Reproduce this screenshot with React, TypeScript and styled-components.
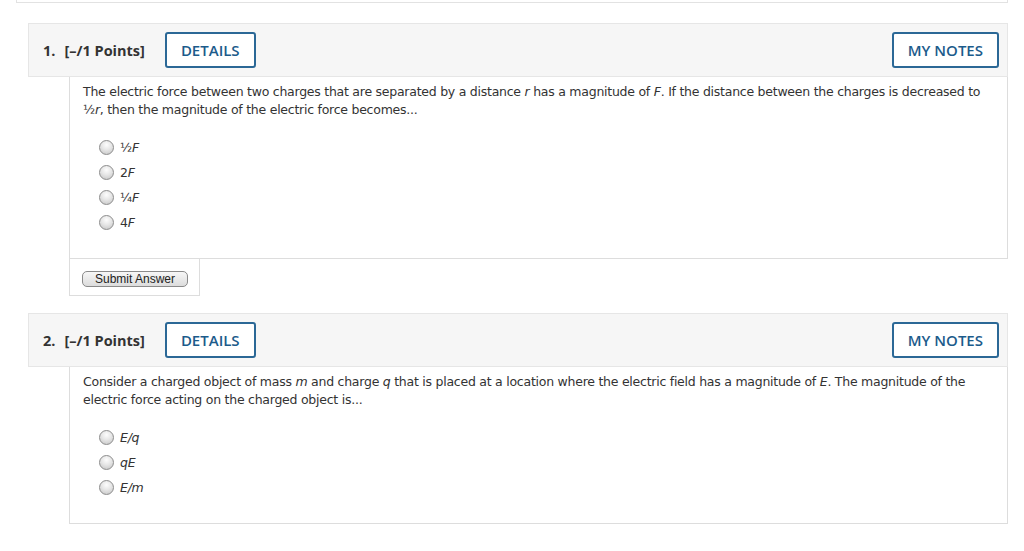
import * as React from 'react';
import styled, { createGlobalStyle } from 'styled-components';

const GlobalStyle = createGlobalStyle`
    body {
        margin: 0;
        background: #ffffff;
    }
    * {
        box-sizing: border-box;
    }
`;

const Page = styled.div`
    display: flex;
    flex-direction: column;
    gap: 17px;
    padding: 0 16px 20px 16px;
`;

const PrevBox = styled.div`
    height: 3px;
    margin-bottom: 3px;
    border: 1px solid #e2e2e2;
    border-top: none;
`;

const Question = styled.section`
    margin-left: 12px;
    display: flex;
    flex-direction: column;
`;

const Header = styled.div`
    display: flex;
    align-items: center;
    height: 54px;
    padding: 0 8px 0 14px;
    background: #f6f6f6;
    border: 1px solid #e6e6e6;
    font-family: 'Open Sans', 'Liberation Sans', sans-serif;
    color: #333333;
`;

const Number = styled.span`
    font-size: 14.5px;
    font-weight: 700;
`;

const Points = styled.span`
    font-size: 14.5px;
    font-weight: 700;
    margin-left: 9px;
`;

const HeaderButton = styled.button<{ $right?: boolean }>`
    height: 36px;
    padding: 0 14px;
    margin-left: ${p => (p.$right ? 'auto' : '20px')};
    background: #ffffff;
    border: 2px solid #2b6896;
    border-radius: 3px;
    color: #1c5b8b;
    font-family: 'Open Sans', 'Liberation Sans', sans-serif;
    font-size: 15px;
    font-weight: 600;
    cursor: pointer;
`;

const Body = styled.div`
    margin-left: 41px;
    padding: 6px 13px 23px 13px;
    border: 1px solid #dddddd;
    border-top: none;
    font-family: 'DejaVu Sans', Verdana, sans-serif;
    font-size: 12.5px;
    letter-spacing: -0.25px;
    line-height: 18px;
    color: #333333;
`;

const Prompt = styled.p`
    margin: 0;
`;

const Options = styled.div`
    display: flex;
    flex-direction: column;
    margin-top: 16px;
    padding-left: 16px;
`;

const Option = styled.label`
    display: flex;
    align-items: center;
    height: 25px;
    gap: 6px;
    cursor: pointer;
`;

const Radio = styled.span`
    width: 15px;
    height: 15px;
    border-radius: 50%;
    border: 1px solid #8c8c8c;
    background: radial-gradient(circle at 50% 30%, #fdfdfd 0%, #e6e6e6 45%, #c2c2c2 100%);
    flex: none;
`;

const SubmitBox = styled.div`
    margin-left: 41px;
    width: 131px;
    height: 37px;
    padding: 12px 0 0 12px;
    border: 1px solid #dddddd;
    border-top: none;
`;

const SubmitButton = styled.button`
    display: block;
    width: 106px;
    height: 16px;
    padding: 0;
    border: 1px solid #8a8a8a;
    border-radius: 5px;
    background: linear-gradient(#f7f7f7, #dcdcdc);
    font-family: 'Liberation Sans', Arial, sans-serif;
    font-size: 12px;
    line-height: 14px;
    color: #222222;
`;

interface IQuestion {
    num: number;
    prompt: React.ReactNode;
    options: React.ReactNode[];
    submit?: boolean;
}

const QuestionBlock = ({ num, prompt, options, submit }: IQuestion) => (
    <Question>
        <Header>
            <Number>{num}.</Number>
            <Points>[–/1 Points]</Points>
            <HeaderButton>DETAILS</HeaderButton>
            <HeaderButton $right>MY NOTES</HeaderButton>
        </Header>
        <Body>
            <Prompt>{prompt}</Prompt>
            <Options>
                {options.map((o, i) => (
                    <Option key={i}>
                        <Radio />
                        <span>{o}</span>
                    </Option>
                ))}
            </Options>
        </Body>
        {submit && (
            <SubmitBox>
                <SubmitButton>Submit Answer</SubmitButton>
            </SubmitBox>
        )}
    </Question>
);

export default function App() {
    return (
        <>
            <GlobalStyle />
            <Page>
                <PrevBox />
                <QuestionBlock
                    num={1}
                    submit
                    prompt={
                        <>
                            The electric force between two charges that are separated by a distance <i>r</i> has a
                            magnitude of <i>F</i>. If the distance between the charges is decreased to ½<i>r</i>,
                            then the magnitude of the electric force becomes...
                        </>
                    }
                    options={[
                        <>½<i>F</i></>,
                        <>2<i>F</i></>,
                        <>¼<i>F</i></>,
                        <>4<i>F</i></>,
                    ]}
                />
                <QuestionBlock
                    num={2}
                    prompt={
                        <>
                            Consider a charged object of mass <i>m</i> and charge <i>q</i> that is placed at a
                            location where the electric field has a magnitude of <i>E</i>. The magnitude of the
                            electric force acting on the charged object is...
                        </>
                    }
                    options={[
                        <i>E/q</i>,
                        <i>qE</i>,
                        <i>E/m</i>,
                    ]}
                />
            </Page>
        </>
    );
}
